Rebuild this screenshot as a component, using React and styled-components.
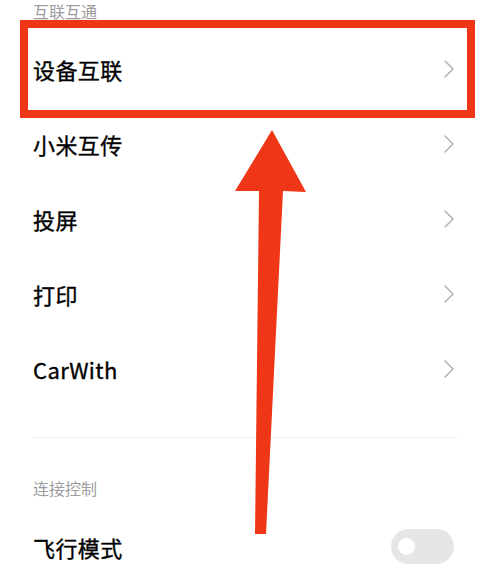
import React from "react";
import styled, { createGlobalStyle } from "styled-components";

const GlobalStyle = createGlobalStyle`
  html, body {
    margin: 0;
    padding: 0;
    background: #ffffff;
  }
  body {
    font-family: "Noto Sans CJK SC", "Noto Sans", sans-serif;
    overflow: hidden;
  }
`;

const Page = styled.div`
  position: relative;
  width: 480px;
  height: 576px;
  background: #ffffff;
  overflow: hidden;
  padding: 1px 26px 0 33px;
  box-sizing: border-box;
`;

const SectionTitle = styled.div`
  height: 20px;
  line-height: 20px;
  font-size: 16px;
  color: #9c9ca0;
  margin-top: ${(p) => p.$top || 0}px;
`;

const List = styled.div`
  display: flex;
  flex-direction: column;
  margin-top: ${(p) => p.$top || 0}px;
`;

const Row = styled.div`
  height: 75px;
  display: flex;
  align-items: center;
  justify-content: space-between;
`;

const Label = styled.span`
  font-size: 22px;
  font-weight: 400;
  color: #000000;
  letter-spacing: 0.4px;
  -webkit-text-stroke: 0.35px #000000;
`;

const Divider = styled.div`
  height: 1px;
  background: #eeeeee;
  margin: 31px -3px 0 0;
`;

const Toggle = styled.div`
  width: 63px;
  height: 35px;
  border-radius: 18px;
  background: #e6e6e6;
  display: flex;
  align-items: center;
  padding-left: 7px;
  box-sizing: border-box;

  &::before {
    content: "";
    width: 17px;
    height: 17px;
    border-radius: 50%;
    background: #ffffff;
  }
`;

const Highlight = styled.div`
  position: absolute;
  left: 20px;
  top: 20px;
  width: 455px;
  height: 98px;
  border: 8.5px solid #ef3617;
  box-sizing: border-box;
  pointer-events: none;
`;

const ArrowLayer = styled.svg`
  position: absolute;
  left: 0;
  top: 0;
  pointer-events: none;
`;

function Chevron() {
  return (
    <svg width="12" height="20" viewBox="0 0 12 20" style={{ marginRight: -1 }}>
      <path d="M2 2 L10 10 L2 18" fill="none" stroke="#b0b0b4" strokeWidth="1.5" strokeLinecap="round" strokeLinejoin="round" />
    </svg>
  );
}

const links = ["设备互联", "小米互传", "投屏", "打印", "CarWith"];

export default function App() {
  return (
    <>
      <GlobalStyle />
      <Page>
        <SectionTitle>互联互通</SectionTitle>
        <List $top={10}>
          {links.map((name) => (
            <Row key={name}>
              <Label>{name}</Label>
              <Chevron />
            </Row>
          ))}
        </List>
        <Divider />
        <SectionTitle $top={40}>连接控制</SectionTitle>
        <List $top={11}>
          <Row>
            <Label>飞行模式</Label>
            <Toggle />
          </Row>
        </List>

        <Highlight />
        <ArrowLayer width="480" height="576" viewBox="0 0 480 576">
          <polygon
            points="272,130 306,192 283,191 266,534 255,534 259,191 235,191"
            fill="#ef3617"
          />
        </ArrowLayer>
      </Page>
    </>
  );
}
